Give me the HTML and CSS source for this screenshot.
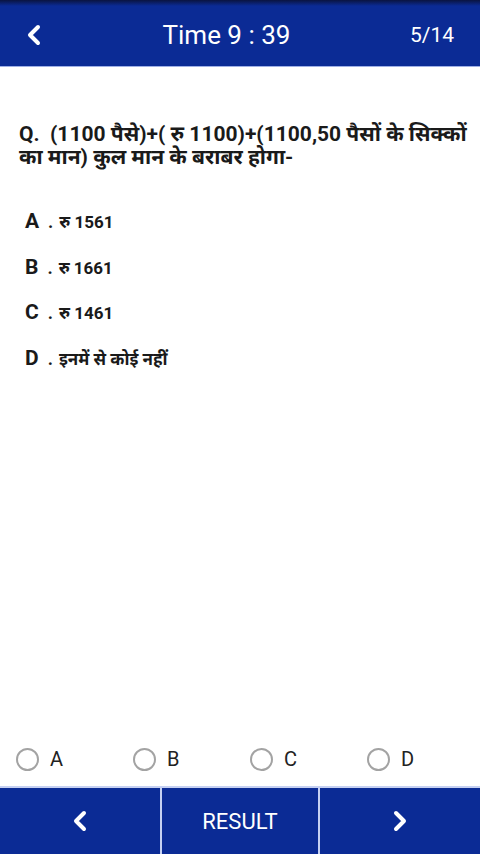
FILE: index.html
```html
<!DOCTYPE html>
<html lang="hi">
  <head>
    <meta charset="UTF-8" />
    <meta name="viewport" content="width=device-width, initial-scale=1.0" />
    <title>Quiz</title>
    <link rel="stylesheet" href="styles.css">
  </head>
  <body>
    <div class="app">
      <!-- header -->
      <div class="topBar">
        <div class="backBtn">
          <svg width="18" height="22" viewBox="0 0 18 22">
            <polyline points="13,3 5,11 13,19" fill="none" stroke="#fff" stroke-width="4" stroke-linecap="round" stroke-linejoin="round" />
          </svg>
        </div>
        <div class="timeText">Time 9 : 39</div>
        <div class="countText">5/14</div>
      </div>

      <!-- question -->
      <div class="content">
        <div class="question">Q.&nbsp; (1100 पैसे)+( रु 1100)+(1100,50 पैसों के सिक्कों का मान) कुल मान के बराबर होगा-</div>
        <ul class="options">
          <li><span class="optKey">A</span><span class="optDot">.</span><span class="optVal">रु 1561</span></li>
          <li><span class="optKey">B</span><span class="optDot">.</span><span class="optVal">रु 1661</span></li>
          <li><span class="optKey">C</span><span class="optDot">.</span><span class="optVal">रु 1461</span></li>
          <li><span class="optKey">D</span><span class="optDot">.</span><span class="optVal">इनमें से कोई नहीं</span></li>
        </ul>
      </div>

      <!-- answer radios -->
      <div class="radioRow">
        <label class="radioItem"><span class="circle"></span>A</label>
        <label class="radioItem"><span class="circle"></span>B</label>
        <label class="radioItem"><span class="circle"></span>C</label>
        <label class="radioItem"><span class="circle"></span>D</label>
      </div>

      <!-- footer -->
      <div class="bottomBar">
        <div class="navBtn">
          <svg width="18" height="22" viewBox="0 0 18 22">
            <polyline points="13,3 5,11 13,19" fill="none" stroke="#fff" stroke-width="4" stroke-linecap="round" stroke-linejoin="round" />
          </svg>
        </div>
        <div class="navBtn resultBtn">RESULT</div>
        <div class="navBtn">
          <svg width="18" height="22" viewBox="0 0 18 22">
            <polyline points="5,3 13,11 5,19" fill="none" stroke="#fff" stroke-width="4" stroke-linecap="round" stroke-linejoin="round" />
          </svg>
        </div>
      </div>
    </div>
  </body>
</html>
```
FILE: styles.css
```css
* {
  margin: 0;
  padding: 0;
  list-style: none;
  box-sizing: border-box;
}
body {
  background: #fff;
  font-family: Roboto, "Noto Sans", "Liberation Sans", sans-serif;
}
.app {
  display: flex;
  flex-direction: column;
  width: 480px;
  height: 854px;
}
.topBar {
  display: flex;
  align-items: center;
  height: 67px;
  padding: 4px 26px 0 25px;
  background: linear-gradient(#0a1440 0, #0b2b95 6px, #0b2b95 100%);
  border-bottom: 1px solid #9fb0e6;
  color: #fff;
}
.backBtn {
  display: flex;
  width: 18px;
}
.timeText {
  flex: 1;
  text-align: center;
  font-size: 26px;
}
.countText {
  font-size: 21px;
}
.content {
  flex: 1;
  padding: 56px 10px 0 19px;
  color: #1a1a1a;
}
.question {
  font-size: 21px;
  font-weight: bold;
  line-height: 23px;
}
.options {
  margin-top: 40px;
  padding-left: 6px;
}
.options li {
  display: flex;
  align-items: baseline;
  height: 45.5px;
  font-weight: bold;
}
.optKey {
  font-size: 21px;
  margin-right: 9px;
}
.optDot {
  font-size: 18px;
  margin-right: 6px;
}
.optVal {
  font-size: 17px;
}
.radioRow {
  display: grid;
  grid-template-columns: repeat(4, 117px);
  padding: 0 0 15px 16px;
}
.radioItem {
  display: flex;
  align-items: center;
  gap: 11px;
  font-size: 20px;
  color: #222;
}
.circle {
  width: 23px;
  height: 23px;
  border: 2px solid #a3a3a3;
  border-radius: 50%;
}
.bottomBar {
  display: grid;
  grid-template-columns: 160px 160px 160px;
  height: 68px;
  border-top: 2px solid #c5d0f2;
  background: #0b2b95;
}
.navBtn {
  display: flex;
  align-items: center;
  justify-content: center;
  color: #fff;
}
.resultBtn {
  font-size: 22px;
  border-left: 2px solid #c5d0f2;
  border-right: 2px solid #c5d0f2;
}
```
